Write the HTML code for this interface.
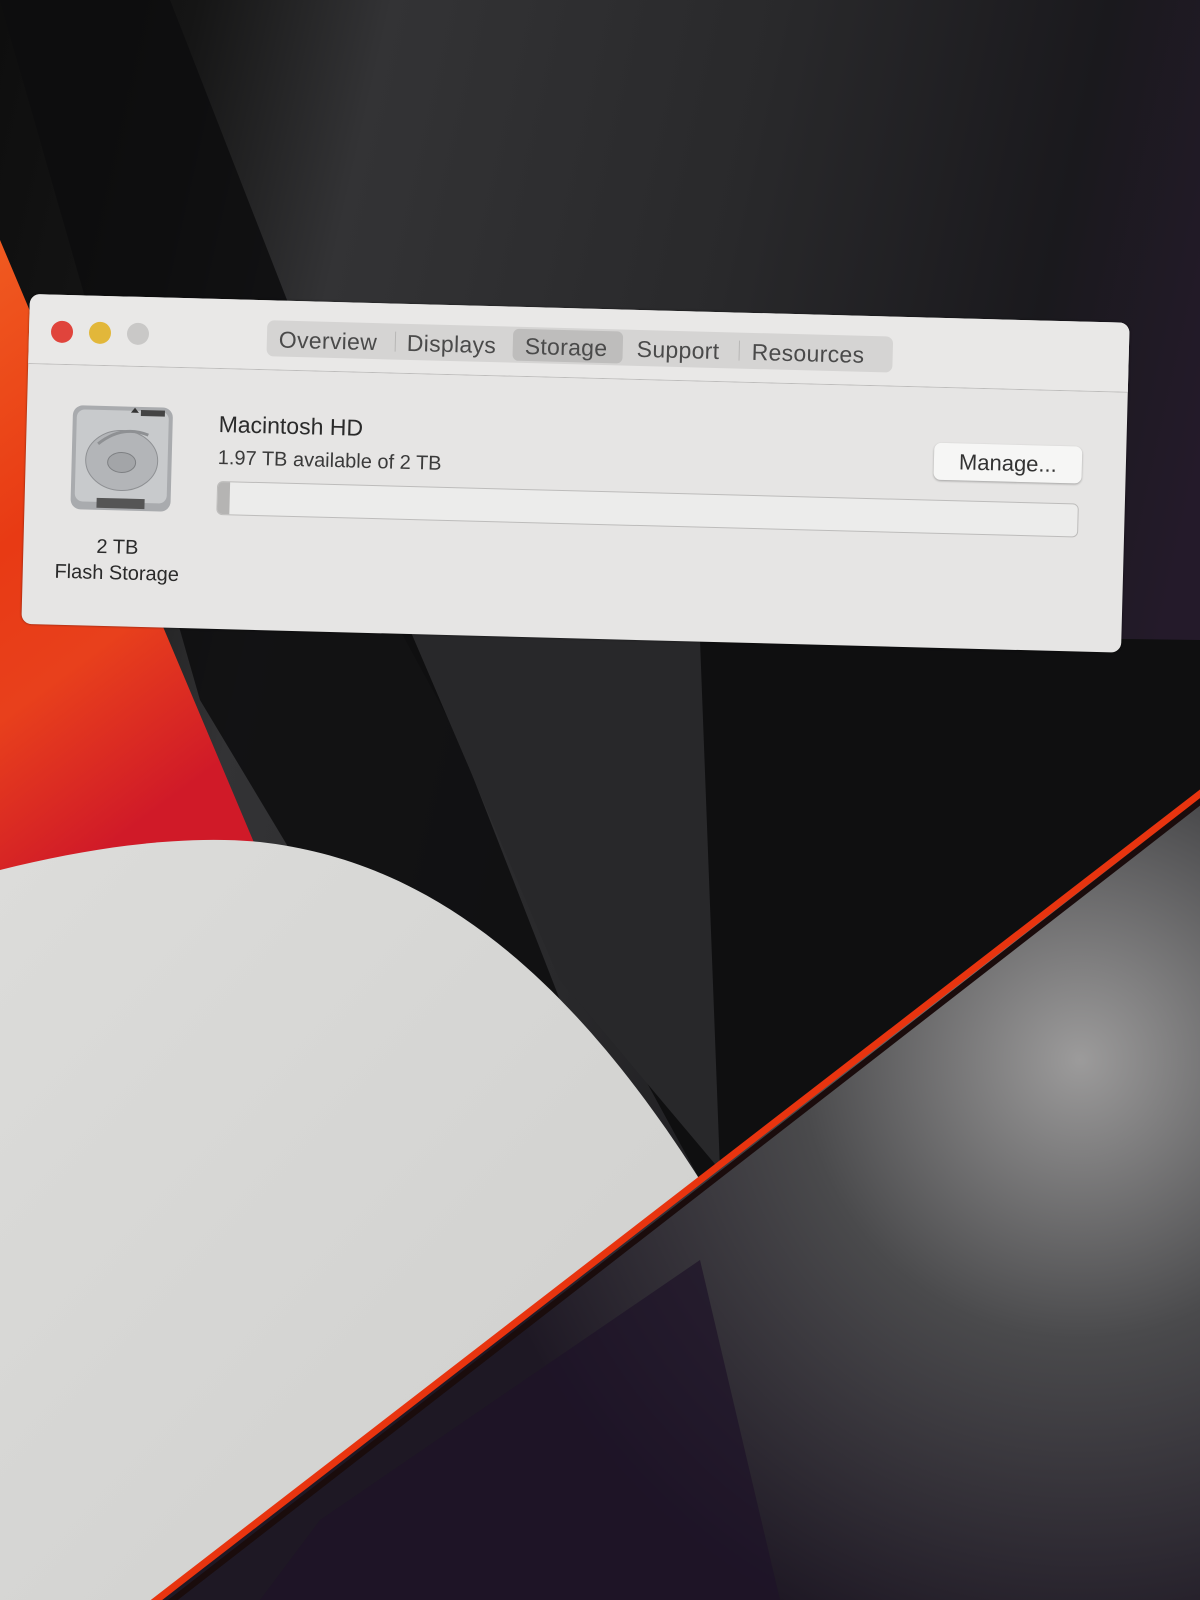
<!DOCTYPE html>
<html><head><meta charset="utf-8"><style>
html,body{margin:0;padding:0;width:1200px;height:1600px;overflow:hidden;background:#161617;font-family:"Liberation Sans",sans-serif}
#bg{position:absolute;left:0;top:0}
#win{position:absolute;left:30px;top:294px;width:1100px;height:330px;transform-origin:0 0;transform:rotate(1.5deg);background:#e6e5e4;border-radius:10px;box-shadow:0 0 2px rgba(0,0,0,.5)}
.tb{position:absolute;left:0;top:0;width:100%;height:69px;background:#e9e8e7;border-radius:10px 10px 0 0;border-bottom:1px solid #bdbcbb}
.dot{position:absolute;top:26px;width:22px;height:22px;border-radius:50%}
.tabs{position:absolute;left:238px;top:20px;width:626px;height:36px;background:#d5d4d3;border-radius:7px}
.t{position:absolute;top:6px;font-size:23px;color:#4a4a4a;letter-spacing:.3px}
.sel{position:absolute;left:246px;top:2px;width:110px;height:32px;background:#bebdbc;border-radius:6px}
.sep{position:absolute;top:8px;width:1px;height:20px;background:#b8b7b6}
.txt{position:absolute;color:#2a2a2a}
.btn{position:absolute;left:908px;top:125px;width:148px;height:37px;background:#f6f6f5;border-radius:7px;box-shadow:0 1px 2px rgba(0,0,0,.3);font-size:22px;color:#333;text-align:center;line-height:37px}
.bar{position:absolute;left:192px;top:182px;width:862px;height:34px;background:#ececeb;border:1px solid #bdbcbb;border-radius:6px;box-sizing:border-box}
.bar i{position:absolute;left:0;top:0;width:12px;height:32px;background:#b5b4b3;border-radius:5px 0 0 5px}
</style></head><body>
<svg id="bg" width="1200" height="1600">
<defs>
<linearGradient id="g1" x1="0" y1="0" x2="1" y2="0.3"><stop offset="0" stop-color="#0e0e0e"/><stop offset="0.15" stop-color="#151515"/><stop offset="0.3" stop-color="#333335"/><stop offset="0.6" stop-color="#29292b"/><stop offset="0.85" stop-color="#1a191d"/><stop offset="1" stop-color="#241a2a"/></linearGradient>
<linearGradient id="red" x1="0" y1="0" x2="0.3" y2="1"><stop offset="0" stop-color="#f05a20"/><stop offset="0.45" stop-color="#e83a14"/><stop offset="0.7" stop-color="#e8401c"/><stop offset="1" stop-color="#d01a28"/></linearGradient>
<linearGradient id="wh" x1="0" y1="0" x2="1" y2="1"><stop offset="0" stop-color="#dcdcda"/><stop offset="1" stop-color="#cfcfcd"/></linearGradient>
<radialGradient id="gr" cx="1080" cy="1060" r="620" gradientUnits="userSpaceOnUse"><stop offset="0" stop-color="#9c9b9b"/><stop offset="0.45" stop-color="#4a4a4c"/><stop offset="1" stop-color="#1e1824"/></radialGradient>
</defs>
<rect width="1200" height="1600" fill="url(#g1)"/>
<polygon points="0,0 170,0 560,1000 700,1180 380,1000 200,700" fill="#0d0d0e" opacity=".85"/>
<polygon points="400,630 1200,640 1200,790 700,1180" fill="#0f0f10"/>
<polygon points="410,630 700,640 720,1170 560,980" fill="#28282a"/>
<polygon points="0,240 255,845 0,870" fill="url(#red)"/>
<path d="M0,870 C100,845 190,835 260,842 C420,860 560,960 700,1180 L160,1600 L0,1600 Z" fill="url(#wh)"/>
<polygon points="1200,795 1200,1600 155,1600" fill="url(#gr)"/>
<polygon points="320,1520 700,1260 780,1600 260,1600" fill="#1e1228" opacity=".7"/>
<line x1="1205" y1="790" x2="150" y2="1605" stroke="#e8340f" stroke-width="7"/>
<line x1="1205" y1="798" x2="160" y2="1610" stroke="#1a0c0c" stroke-width="6"/>
</svg>
<div id="win">
<div class="tb">
<div class="dot" style="left:22px;background:#e0443c"></div>
<div class="dot" style="left:60px;background:#e2b73a"></div>
<div class="dot" style="left:98px;background:#c9c8c7"></div>
<div class="tabs">
<div class="sel"></div>
<div class="t" style="left:12px">Overview</div>
<div class="sep" style="left:128px"></div>
<div class="t" style="left:140px">Displays</div>
<div class="t" style="left:258px">Storage</div>
<div class="t" style="left:370px">Support</div>
<div class="sep" style="left:472px"></div>
<div class="t" style="left:485px">Resources</div>
</div>
</div>
<svg style="position:absolute;left:42px;top:108px" width="108" height="112" viewBox="0 0 108 112">
<rect x="4" y="2" width="100" height="104" rx="10" fill="#a9abae"/>
<rect x="8" y="6" width="92" height="92" rx="8" fill="#c8cacc"/>
<ellipse cx="54" cy="56" rx="36" ry="30" fill="#b3b5b8" stroke="#8e9093"/>
<ellipse cx="54" cy="58" rx="14" ry="10" fill="#a3a5a8" stroke="#7e8083"/>
<path d="M30,40 Q54,20 80,30" stroke="#8e9093" fill="none" stroke-width="3"/>
<polygon points="62,8 70,8 66,3" fill="#333"/>
<rect x="72" y="5" width="24" height="6" fill="#444"/>
<rect x="30" y="94" width="48" height="10" fill="#555"/>
</svg>
<div class="txt" style="left:34px;top:240px;width:120px;text-align:center;font-size:20px">2 TB</div>
<div class="txt" style="left:24px;top:266px;width:140px;text-align:center;font-size:20px">Flash Storage</div>
<div class="txt" style="left:192px;top:112px;font-size:23px">Macintosh HD</div>
<div class="txt" style="left:192px;top:148px;font-size:20px;color:#3a3a3a">1.97 TB available of 2 TB</div>
<div class="btn">Manage...</div>
<div class="bar"><i></i></div>
</div>
</body></html>
